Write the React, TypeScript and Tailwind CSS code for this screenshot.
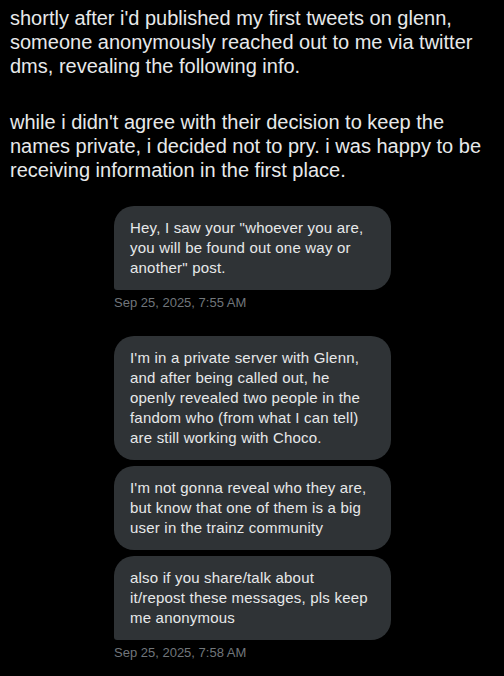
const intro = [
  "shortly after i'd published my first tweets on glenn,\nsomeone anonymously reached out to me via twitter\ndms, revealing the following info.",
  "while i didn't agree with their decision to keep the\nnames private, i decided not to pry. i was happy to be\nreceiving information in the first place.",
];

type Msg = { text: string; tail?: boolean };

const groups: { messages: Msg[]; time: string }[] = [
  {
    messages: [
      {
        text: 'Hey, I saw your "whoever you are,\nyou will be found out one way or\nanother" post.',
        tail: true,
      },
    ],
    time: "Sep 25, 2025, 7:55 AM",
  },
  {
    messages: [
      {
        text: "I'm in a private server with Glenn,\nand after being called out, he\nopenly revealed two people in the\nfandom who (from what I can tell)\nare still working with Choco.",
      },
      {
        text: "I'm not gonna reveal who they are,\nbut know that one of them is a big\nuser in the trainz community",
      },
      {
        text: "also if you share/talk about\nit/repost these messages, pls keep\nme anonymous",
        tail: true,
      },
    ],
    time: "Sep 25, 2025, 7:58 AM",
  },
];

function Lines({ text }: { text: string }) {
  const parts = text.split("\n");
  return (
    <>
      {parts.map((line, i) => (
        <span key={i} className="block whitespace-nowrap">
          {line}
        </span>
      ))}
    </>
  );
}

export default function App() {
  return (
    <div className="min-h-[676px] w-[504px] bg-black font-['Segoe_UI','Liberation_Sans',sans-serif]">
      <div className="flex flex-col gap-8 px-[10px] pt-[6px] text-[20px] leading-6 text-[#e7e9ea]">
        {intro.map((p, i) => (
          <p key={i}>
            <Lines text={p} />
          </p>
        ))}
      </div>

      <div className="mt-6 flex flex-col gap-[25px] pl-[114px]">
        {groups.map((g, i) => (
          <div key={i} className="flex flex-col">
            <div className="flex flex-col gap-[6px]">
              {g.messages.map((m, j) => (
                <div
                  key={j}
                  className={
                    m.tail
                      ? "w-[277px] rounded-[20px] rounded-bl-[3px] bg-[#2f3336] px-4 py-3 text-[15px] leading-5 tracking-[0.2px] text-[#e7e9ea]"
                      : "w-[277px] rounded-[20px] bg-[#2f3336] px-4 py-3 text-[15px] leading-5 tracking-[0.2px] text-[#e7e9ea]"
                  }
                >
                  <Lines text={m.text} />
                </div>
              ))}
            </div>
            <p className="mt-[5px] text-[13px] leading-4 text-[#71767b]">{g.time}</p>
          </div>
        ))}
      </div>
    </div>
  );
}
